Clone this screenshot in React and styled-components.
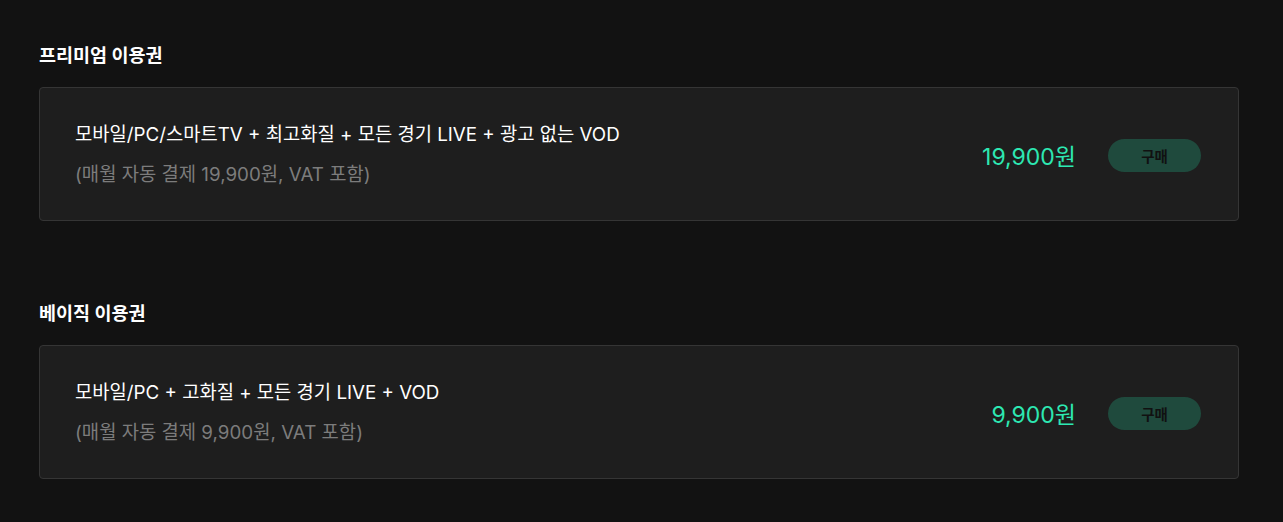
// External Dependencies
import React from 'react';
import styled, { createGlobalStyle } from 'styled-components';

// Local Variables
const GlobalStyle = createGlobalStyle`
  html, body {
    margin: 0;
    padding: 0;
    background: #121212;
  }
  body {
    font-family: Inter, "Noto Sans CJK KR", sans-serif;
    color: #fff;
  }
`;

const Page = styled.main`
  padding: 42px 44px 40px 39px;
  display: flex;
  flex-direction: column;
  gap: 79px;
`;

const Section = styled.section`
  display: flex;
  flex-direction: column;
  gap: 19px;
`;

const Title = styled.h3`
  margin: 0;
  font-size: 18.5px;
  font-weight: 700;
  line-height: 26px;
`;

const Card = styled.div`
  display: flex;
  align-items: center;
  justify-content: space-between;
  background: #1e1e1e;
  border: 1px solid #353535;
  border-radius: 4px;
  padding: 34px 37px 32px 35px;
`;

const Info = styled.div`
  display: flex;
  flex-direction: column;
  gap: 14px;
`;

const Headline = styled.p`
  margin: 0;
  font-size: 18.75px;
  line-height: 26px;
  color: #fff;
`;

const Note = styled.p`
  margin: 0;
  font-size: 18.8px;
  line-height: 26px;
  color: #7c7c7c;
`;

const Side = styled.div`
  display: flex;
  align-items: center;
  gap: 32px;
`;

const Price = styled.span`
  font-size: 23px;
  color: #2de8b2;
`;

const BuyButton = styled.button`
  width: 93px;
  height: 33px;
  border: none;
  border-radius: 17px;
  background: #1f4a3d;
  color: #111;
  font-family: inherit;
  font-size: 14.5px;
  font-weight: 700;
  cursor: pointer;
`;

const plans = [
  {
    title: '프리미엄 이용권',
    headline: '모바일/PC/스마트TV + 최고화질 + 모든 경기 LIVE + 광고 없는 VOD',
    note: '(매월 자동 결제 19,900원, VAT 포함)',
    price: '19,900원'
  },
  {
    title: '베이직 이용권',
    headline: '모바일/PC + 고화질 + 모든 경기 LIVE + VOD',
    note: '(매월 자동 결제 9,900원, VAT 포함)',
    price: '9,900원'
  }
];

// Component Definition
export default function App() {
  return (
    <>
      <GlobalStyle />
      <Page>
        {plans.map(plan => (
          <Section key={plan.title}>
            <Title>{plan.title}</Title>
            <Card>
              <Info>
                <Headline>{plan.headline}</Headline>
                <Note>{plan.note}</Note>
              </Info>
              <Side>
                <Price>{plan.price}</Price>
                <BuyButton>구매</BuyButton>
              </Side>
            </Card>
          </Section>
        ))}
      </Page>
    </>
  );
}
